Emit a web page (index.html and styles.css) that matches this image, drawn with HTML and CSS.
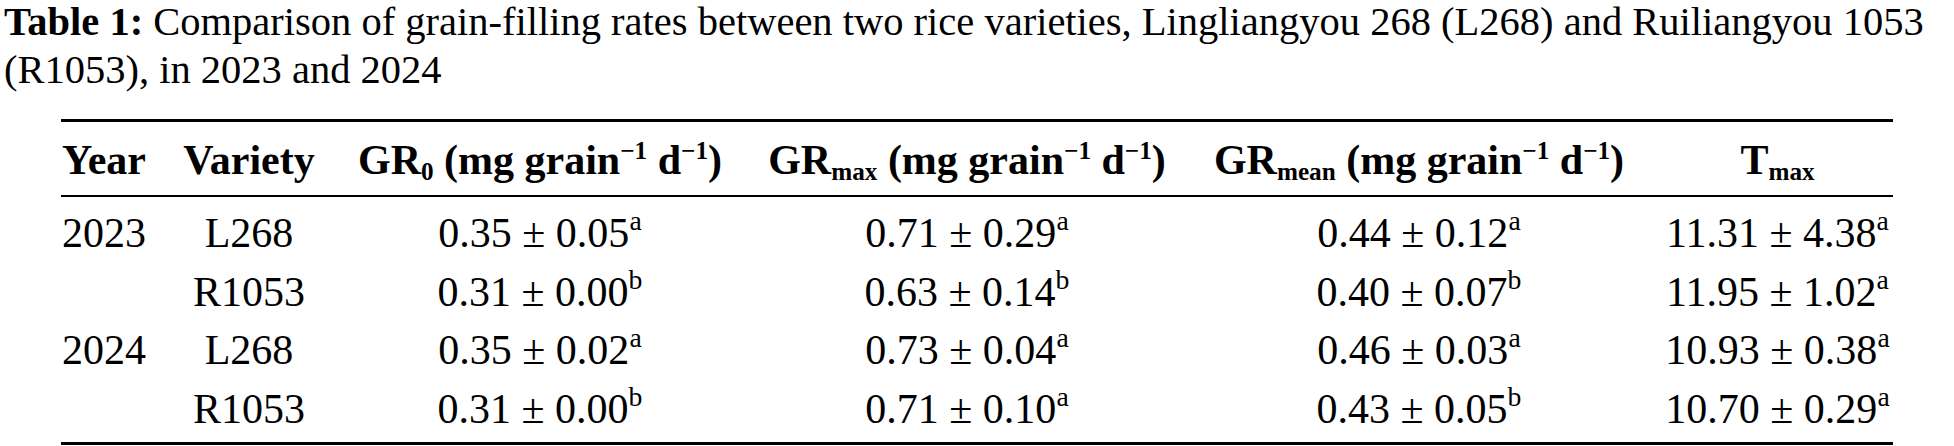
FILE: index.html
```html
<!DOCTYPE html>
<html lang="en">
<head>
<meta charset="utf-8">
<title>Table 1</title>
<link rel="stylesheet" href="styles.css">
</head>
<body>
<div class="page">
  <p class="caption"><b>Table 1:</b> Comparison of grain-filling rates between two rice varieties, Lingliangyou 268 (L268) and Ruiliangyou 1053 (R1053), in 2023 and 2024</p>
  <table class="data">
    <colgroup>
      <col class="c-year">
      <col class="c-var">
      <col class="c-gr0">
      <col class="c-grmax">
      <col class="c-grmean">
      <col class="c-tmax">
    </colgroup>
    <thead>
      <tr>
        <th class="left">Year</th>
        <th>Variety</th>
        <th>GR<sub>0</sub> (mg grain<sup>−1</sup> d<sup>−1</sup>)</th>
        <th>GR<sub>max</sub> (mg grain<sup>−1</sup> d<sup>−1</sup>)</th>
        <th>GR<sub>mean</sub> (mg grain<sup>−1</sup> d<sup>−1</sup>)</th>
        <th class="last">T<sub>max</sub></th>
      </tr>
    </thead>
    <tbody>
      <tr>
        <td class="left">2023</td>
        <td>L268</td>
        <td>0.35 ± 0.05<sup>a</sup></td>
        <td>0.71 ± 0.29<sup>a</sup></td>
        <td>0.44 ± 0.12<sup>a</sup></td>
        <td class="last">11.31 ± 4.38<sup>a</sup></td>
      </tr>
      <tr>
        <td class="left"></td>
        <td>R1053</td>
        <td>0.31 ± 0.00<sup>b</sup></td>
        <td>0.63 ± 0.14<sup>b</sup></td>
        <td>0.40 ± 0.07<sup>b</sup></td>
        <td class="last">11.95 ± 1.02<sup>a</sup></td>
      </tr>
      <tr>
        <td class="left">2024</td>
        <td>L268</td>
        <td>0.35 ± 0.02<sup>a</sup></td>
        <td>0.73 ± 0.04<sup>a</sup></td>
        <td>0.46 ± 0.03<sup>a</sup></td>
        <td class="last">10.93 ± 0.38<sup>a</sup></td>
      </tr>
      <tr>
        <td class="left"></td>
        <td>R1053</td>
        <td>0.31 ± 0.00<sup>b</sup></td>
        <td>0.71 ± 0.10<sup>a</sup></td>
        <td>0.43 ± 0.05<sup>b</sup></td>
        <td class="last">10.70 ± 0.29<sup>a</sup></td>
      </tr>
    </tbody>
  </table>
</div>
</body>
</html>
```

FILE: styles.css
```css
html, body {
  margin: 0;
  padding: 0;
  background: #ffffff;
}

body {
  font-family: "Liberation Serif", "Times New Roman", serif;
  color: #000000;
}

.page {
  width: 1954px;
  height: 446px;
  overflow: hidden;
}

.caption {
  margin: -2px 0 0 0;
  padding-left: 4px;
  max-width: 1945px;
  font-size: 40.5px;
  line-height: 48px;
}

.caption b {
  font-weight: bold;
}

.data {
  margin: 25px 0 0 61px;
  width: 1832px;
  table-layout: fixed;
  border-collapse: collapse;
  border-top: 3px solid #000;
  border-bottom: 3px solid #000;
  font-size: 42px;
}

.c-year { width: 101px; }
.c-var { width: 174px; }
.c-gr0 { width: 408px; }
.c-grmax { width: 446px; }
.c-grmean { width: 458px; }
.c-tmax { width: 245px; }

.data th,
.data td {
  padding: 0;
  text-align: center;
  white-space: nowrap;
}

.data th {
  font-weight: bold;
  line-height: 69px;
  padding-top: 4px;
  border-bottom: 2px solid #000;
}

.data td {
  font-weight: normal;
  line-height: 58.7px;
}

.data tbody tr:first-child td {
  padding-top: 7px;
}

.data tbody tr:last-child td {
  padding-bottom: 3px;
}

.data .left {
  text-align: left;
  padding-left: 1px;
}

.data .last {
  padding-left: 14px;
}

.data sup,
.data sub {
  font-size: 0.6em;
  line-height: 0;
}

.data td sup {
  font-size: 0.66em;
  vertical-align: 0.62em;
}

.data th sup {
  vertical-align: 0.6em;
}

.data sub {
  vertical-align: -0.22em;
}
```
